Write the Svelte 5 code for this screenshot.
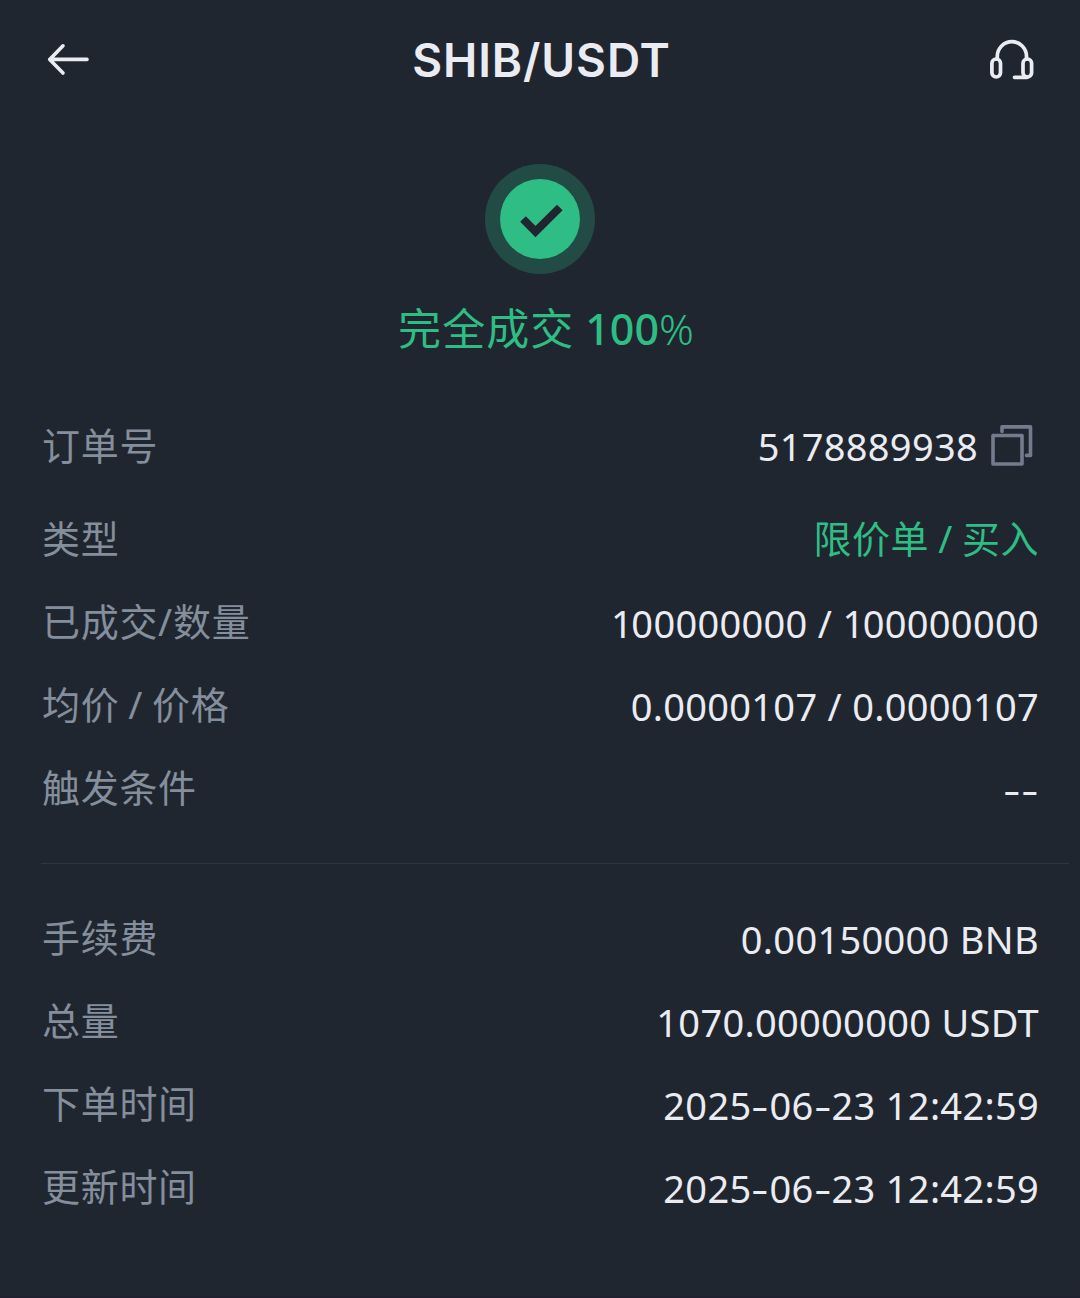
<script lang="ts">
	const pair = 'SHIB/USDT';
	const orderId = '5178889938';

	const orderRows = [
		{ label: '已成交/数量', value: '100000000 / 100000000' },
		{ label: '均价 / 价格', value: '0.0000107 / 0.0000107' },
		{ label: '触发条件', value: '--' }
	];

	const summaryRows = [
		{ label: '手续费', value: '0.00150000 BNB' },
		{ label: '总量', value: '1070.00000000 USDT' },
		{ label: '下单时间', value: '2025-06-23 12:42:59' },
		{ label: '更新时间', value: '2025-06-23 12:42:59' }
	];
</script>

{#snippet row(label: string, value: string)}
	<div class="row">
		<span class="label">{label}</span>
		<span class="value">
			{#each value.split(/(-|1(?=00))/) as part}{#if part === '-'}<span class="dash">-</span>{:else if part === '1'}<span class="one">1</span>{:else}{part}{/if}{/each}
		</span>
	</div>
{/snippet}

<div class="page">
	<header class="header">
		<button class="icon-button" aria-label="返回">
			<svg width="44" height="34" viewBox="0 0 44 34" fill="none" stroke="currentColor" stroke-width="3.6" stroke-linecap="round" stroke-linejoin="round">
				<path d="M17 2.800 3.700 16.400 17 30M3.700 16.400H41" />
			</svg>
		</button>
		<h1 class="title">{pair}</h1>
		<button class="icon-button" aria-label="客服">
			<svg width="46" height="42" viewBox="0 0 46 42" fill="none" stroke="currentColor" stroke-width="3.7" stroke-linecap="round">
				<rect x="2.900" y="20" width="8.600" height="18" rx="4.300" />
				<rect x="34" y="20" width="8.600" height="18" rx="4.300" />
				<path d="M8.300 20V17.300a14.600 14.600 0 0 1 29.200 0V20M25.500 38.300H38" />
			</svg>
		</button>
	</header>

	<section class="status">
		<div class="badge">
			<div class="badge-inner">
				<svg width="80" height="80" viewBox="0 0 80 80" fill="none" stroke="#20262f" stroke-width="8">
					<path d="M23 40 35.500 52.500 59.800 28.500" />
				</svg>
			</div>
		</div>
		<p class="status-text">完全成交 <span class="percent">100<span class="sign">%</span></span></p>
	</section>

	<section class="details">
		<div class="row row-id">
			<span class="label">订单号</span>
			<span class="value">{orderId}</span>
			<svg class="copy" width="42" height="42" viewBox="0 0 42 42" fill="none" stroke="currentColor" stroke-width="3.6" stroke-linejoin="round" stroke-linecap="round">
				<rect x="2" y="10.500" width="29" height="28.500" />
				<path d="M11 6.500V1.900h28.500v28.500H35.500" />
			</svg>
		</div>
		<div class="row">
			<span class="label">类型</span>
			<span class="value buy">限价单 / 买入</span>
		</div>
		{#each orderRows as item}
			{@render row(item.label, item.value)}
		{/each}
	</section>

	<hr class="divider" />

	<section class="summary">
		{#each summaryRows as item}
			{@render row(item.label, item.value)}
		{/each}
	</section>
</div>

<style>
	:global(body) {
		margin: 0;
		background: #20262f;
	}

	.page {
		box-sizing: border-box;
		height: 1298px;
		background: #20262f;
		border-bottom: 2px solid #1f2030;
		color: #eaecf2;
		font-family: 'Noto Sans', 'Noto Sans CJK SC', sans-serif;
		overflow: hidden;
	}

	.header {
		display: flex;
		align-items: center;
		justify-content: space-between;
		height: 120px;
		padding: 0 45px 0 46px;
	}

	.icon-button {
		display: flex;
		padding: 0;
		border: none;
		background: none;
		color: #eaecf2;
	}

	.title {
		margin: 0 0 0 4px;
		font-family: Inter, sans-serif;
		font-size: 46px;
		font-weight: 600;
		line-height: 60px;
		letter-spacing: 0.9px;
	}

	.status {
		display: flex;
		flex-direction: column;
		align-items: center;
		height: 279px;
		padding-top: 44px;
		box-sizing: border-box;
	}

	.badge {
		display: flex;
		align-items: center;
		justify-content: center;
		width: 110px;
		height: 110px;
		border-radius: 50%;
		background: #234b45;
	}

	.badge-inner {
		width: 80px;
		height: 80px;
		border-radius: 50%;
		background: #2ebd85;
	}

	.status-text {
		margin: 22px 0 0 12px;
		color: #2ebd85;
		font-family: 'Noto Sans CJK SC', sans-serif;
		font-size: 43px;
		font-weight: 400;
		line-height: 60px;
		letter-spacing: 1.1px;
		white-space: nowrap;
	}

	.percent {
		font-family: 'Noto Sans', sans-serif;
		font-weight: 500;
		letter-spacing: 0;
	}

	.sign {
		font-weight: 300;
	}

	.row {
		display: flex;
		align-items: center;
		height: 83px;
		padding: 0 41px 0 42px;
		font-size: 38px;
		line-height: 54px;
		white-space: nowrap;
	}

	.row-id {
		height: 94px;
		margin-bottom: 5px;
	}

	.label {
		flex: 1;
		margin-bottom: 3px;
		color: #848e9c;
		letter-spacing: 0.7px;
		word-spacing: -1.7px;
	}

	.value {
		letter-spacing: 0.3px;
	}

	.copy {
		margin: 0 6px 0 13px;
		color: #757b8d;
	}

	.buy {
		margin-bottom: 3px;
		color: #2ebd85;
		letter-spacing: 0.5px;
		word-spacing: -1.2px;
	}

	.one {
		letter-spacing: -1.5px;
	}

	.dash {
		display: inline-block;
		width: 18px;
		text-align: center;
		transform: scaleX(1.4);
	}

	.divider {
		height: 1px;
		margin: 33px 11px 33px 41px;
		border: none;
		background: #2f3641;
	}
</style>
